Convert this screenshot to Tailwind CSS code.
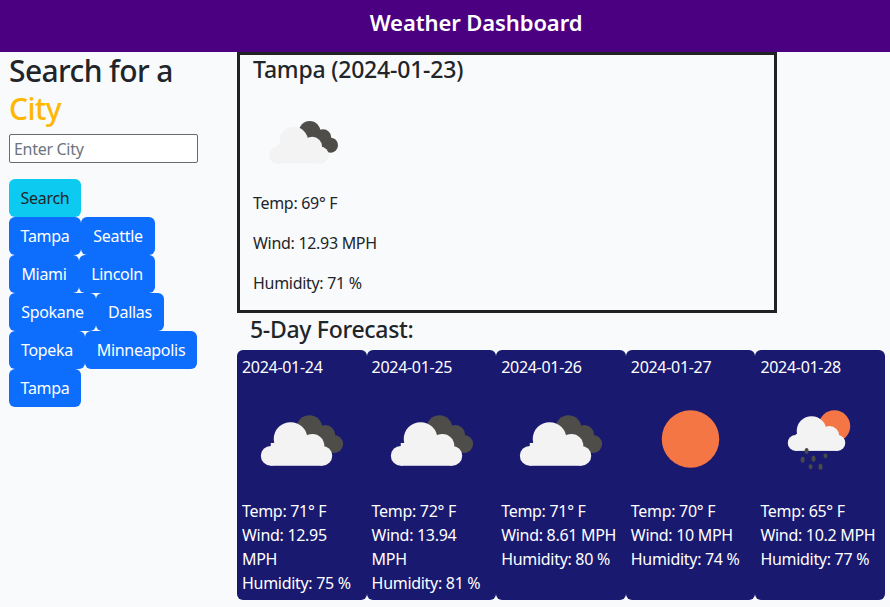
<!DOCTYPE html>
<html lang="en">
<head>
  <meta charset="UTF-8" />
  <meta name="viewport" content="width=device-width, initial-scale=1.0"/>
  <title>Weather Dashboard</title>
  <script src="https://cdn.jsdelivr.net/npm/@tailwindcss/browser@4"></script>
</head>
<body class="bg-[#f9fafc] text-[#212529] font-['Noto_Sans',sans-serif] text-[16px] leading-6 tracking-[-0.3px]">

  <!-- icons -->
  <svg class="hidden" xmlns="http://www.w3.org/2000/svg">
    <symbol id="clouds" viewBox="0 0 120 120">
      <g fill="#4e4d49">
        <circle cx="68" cy="49" r="13"/><circle cx="84" cy="56" r="10"/><circle cx="93" cy="65" r="9"/>
        <rect x="60" y="52" width="30" height="22"/>
      </g>
      <g fill="#f3f3f3">
        <circle cx="49" cy="60" r="17"/><circle cx="71" cy="67" r="12"/><circle cx="29" cy="77" r="10"/><circle cx="81" cy="77" r="10"/>
        <rect x="29" y="64" width="52" height="23"/>
      </g>
    </symbol>
    <symbol id="sun" viewBox="0 0 120 120">
      <circle cx="60" cy="60" r="29" fill="#f47645"/>
    </symbol>
    <symbol id="rain" viewBox="0 0 120 120">
      <circle cx="75" cy="47" r="16" fill="#f47645"/>
      <g fill="#f3f3f3">
        <circle cx="52" cy="52" r="15"/><circle cx="70" cy="57" r="10"/><circle cx="36" cy="64" r="8"/><circle cx="78" cy="64" r="8"/>
        <rect x="36" y="55" width="42" height="17"/>
      </g>
      <g fill="#4a4a48">
        <ellipse cx="47" cy="72" rx="2" ry="3"/><ellipse cx="43" cy="81" rx="2" ry="3"/><ellipse cx="54" cy="80" rx="2" ry="3"/>
        <ellipse cx="66" cy="77" rx="2" ry="2.5"/><ellipse cx="51" cy="88" rx="2" ry="2.5"/><ellipse cx="61" cy="88" rx="2" ry="3"/>
      </g>
    </symbol>
  </svg>

  <header class="h-[52px] bg-[#4b0082] flex items-center justify-center pl-[62px] pb-2">
    <h1 class="text-white text-[22px] font-semibold tracking-[-0.1px]">Weather Dashboard</h1>
  </header>

  <main class="flex">
    <!-- search column -->
    <aside class="w-[237px] shrink-0 pl-[9px] pr-[30px]">
      <h2 class="text-[30px] leading-[38px] font-medium tracking-[-0.6px]">Search for a <span class="text-[#ffb703]">City</span></h2>
      <input type="text" placeholder="Enter City" class="block w-[189px] h-[29px] mt-[6px] px-1 bg-white border border-[#6b6b6b] rounded-[2px] placeholder:text-[#6c757d]">
      <button class="block w-[72px] h-[38px] mt-[16px] bg-[#0dcaf0] rounded-md">Search</button>
      <div class="flex flex-wrap w-[200px]">
        <button class="w-[72px] h-[38px] bg-[#0d6efd] text-white rounded-md">Tampa</button>
        <button class="w-[74px] h-[38px] bg-[#0d6efd] text-white rounded-md">Seattle</button>
        <button class="w-[70px] h-[38px] bg-[#0d6efd] text-white rounded-md">Miami</button>
        <button class="w-[76px] h-[38px] bg-[#0d6efd] text-white rounded-md">Lincoln</button>
        <button class="w-[87px] h-[38px] bg-[#0d6efd] text-white rounded-md">Spokane</button>
        <button class="w-[68px] h-[38px] bg-[#0d6efd] text-white rounded-md">Dallas</button>
        <button class="w-[76px] h-[38px] bg-[#0d6efd] text-white rounded-md">Topeka</button>
        <button class="w-[112px] h-[38px] bg-[#0d6efd] text-white rounded-md">Minneapolis</button>
        <button class="w-[72px] h-[38px] bg-[#0d6efd] text-white rounded-md">Tampa</button>
      </div>
    </aside>

    <section class="w-[648px]">
      <!-- current weather -->
      <div class="w-[540px] h-[261px] border-[3px] border-[#222222] pl-[13px]">
        <h3 class="text-[23px] leading-[29px] font-medium tracking-[-0.2px]">Tampa (2024-01-23)</h3>
        <svg class="w-[100px] h-[100px] mt-[7px]"><use href="#clouds"/></svg>
        <p class="mb-4">Temp: 69° F</p>
        <p class="mb-4">Wind: 12.93 MPH</p>
        <p>Humidity: 71 %</p>
      </div>

      <h3 class="text-[23px] leading-[29px] font-medium tracking-[-0.3px] pl-[13px] mt-[2px] mb-[6px]">5-Day Forecast:</h3>

      <!-- forecast -->
      <div class="grid grid-cols-5 h-[250px]">
        <div class="bg-[#191970] text-white rounded-md p-[5px]">
          <p>2024-01-24</p>
          <svg class="w-[119px] h-[120px]"><use href="#clouds"/></svg>
          <p>Temp: 71° F</p>
          <p>Wind: 12.95 MPH</p>
          <p>Humidity: 75 %</p>
        </div>
        <div class="bg-[#191970] text-white rounded-md p-[5px]">
          <p>2024-01-25</p>
          <svg class="w-[119px] h-[120px]"><use href="#clouds"/></svg>
          <p>Temp: 72° F</p>
          <p>Wind: 13.94 MPH</p>
          <p>Humidity: 81 %</p>
        </div>
        <div class="bg-[#191970] text-white rounded-md p-[5px]">
          <p>2024-01-26</p>
          <svg class="w-[119px] h-[120px]"><use href="#clouds"/></svg>
          <p>Temp: 71° F</p>
          <p>Wind: 8.61 MPH</p>
          <p>Humidity: 80 %</p>
        </div>
        <div class="bg-[#191970] text-white rounded-md p-[5px]">
          <p>2024-01-27</p>
          <svg class="w-[119px] h-[120px]"><use href="#sun"/></svg>
          <p>Temp: 70° F</p>
          <p>Wind: 10 MPH</p>
          <p>Humidity: 74 %</p>
        </div>
        <div class="bg-[#191970] text-white rounded-md p-[5px]">
          <p>2024-01-28</p>
          <svg class="w-[119px] h-[120px]"><use href="#rain"/></svg>
          <p>Temp: 65° F</p>
          <p>Wind: 10.2 MPH</p>
          <p>Humidity: 77 %</p>
        </div>
      </div>
    </section>
  </main>
</body>
</html>
